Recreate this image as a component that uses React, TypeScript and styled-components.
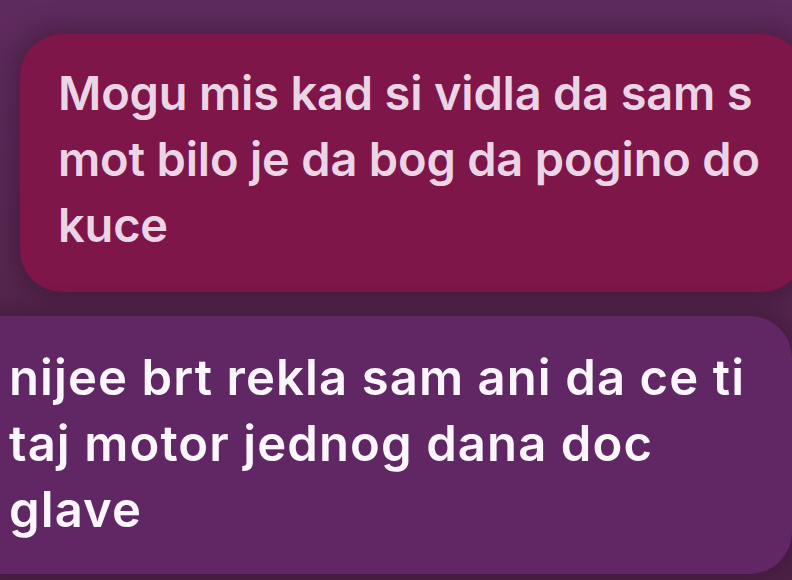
import styled, { createGlobalStyle } from "styled-components";

const Global = createGlobalStyle`
  html, body {
    margin: 0;
    padding: 0;
    background: #5b2a5a;
    overflow: hidden;
  }
`;

const Screen = styled.div`
  width: 792px;
  height: 580px;
  overflow: hidden;
  display: flex;
  flex-direction: column;
  background: linear-gradient(180deg, #5f2b5e 0%, #55264f 50%, #4e2248 100%);
  font-family: Inter, "Noto Sans", sans-serif;
`;

const Bubble = styled.div<{ $tone: "sent" | "received" }>`
  box-sizing: border-box;
  flex: none;
  height: 258px;
  border-radius: 42px;
  line-height: 66px;
  background: ${(p) => (p.$tone === "sent" ? "#7e1649" : "#612664")};
  color: ${(p) => (p.$tone === "sent" ? "#ebd4e6" : "#fbf6fb")};
  box-shadow: 0 0 22px 6px rgba(55, 20, 50, 0.55);
  ${(p) =>
    p.$tone === "sent"
      ? `
    margin: 34px -12px 0 20px;
    padding: 26px 0 0 38px;
    font-size: 47px;
    font-weight: 600;
    letter-spacing: -0.2px;
  `
      : `
    margin: 24px 0 0 -40px;
    padding: 29px 0 0 49px;
    width: 832px;
    font-size: 49px;
    font-weight: 640;
    letter-spacing: 1.1px;
  `}
`;

const Line = styled.div`
  white-space: nowrap;
`;

export default function App() {
  return (
    <>
      <Global />
      <Screen>
        <Bubble $tone="sent">
          <Line>Mogu mis kad si vidla da sam s</Line>
          <Line>mot bilo je da bog da pogino do</Line>
          <Line>kuce</Line>
        </Bubble>
        <Bubble $tone="received">
          <Line>nijee brt rekla sam ani da ce ti</Line>
          <Line>taj motor jednog dana doc</Line>
          <Line>glave</Line>
        </Bubble>
      </Screen>
    </>
  );
}
